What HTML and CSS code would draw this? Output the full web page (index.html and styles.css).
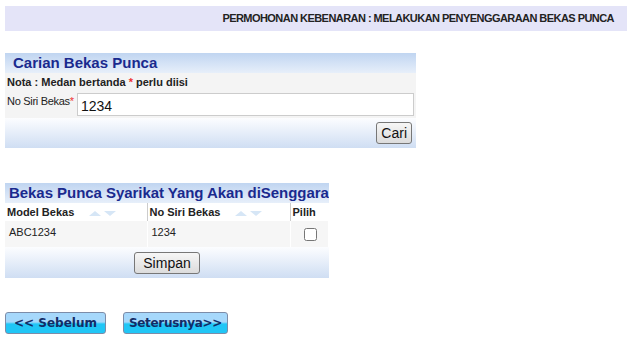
FILE: index.html
```html
<!DOCTYPE html>
<html lang="ms">
<head>
    <meta charset="UTF-8">
    <title>Penyenggaraan Bekas Punca</title>
    <link rel="stylesheet" href="styles.css">
</head>
<body>
    <div class="page-title">PERMOHONAN KEBENARAN : MELAKUKAN PENYENGGARAAN BEKAS PUNCA</div>

    <div class="panel search-panel">
        <div class="panel-head">Carian Bekas Punca</div>
        <div class="note">Nota : Medan bertanda <span class="req">*</span> perlu diisi</div>
        <div class="field-row">
            <label for="no-siri">No Siri Bekas<span class="req">*</span></label>
            <input type="text" id="no-siri" value="1234">
        </div>
        <div class="panel-foot right">
            <button class="btn">Cari</button>
        </div>
    </div>

    <div class="panel result-panel">
        <div class="panel-head">Bekas Punca Syarikat Yang Akan diSenggara</div>
        <table class="grid">
            <thead>
                <tr>
                    <th class="col-model">Model Bekas <span class="sort"><i class="up"></i><i class="down"></i></span></th>
                    <th class="col-siri">No Siri Bekas <span class="sort"><i class="up"></i><i class="down"></i></span></th>
                    <th class="col-pilih">Pilih</th>
                </tr>
            </thead>
            <tbody>
                <tr>
                    <td>ABC1234</td>
                    <td>1234</td>
                    <td class="center"><input type="checkbox"></td>
                </tr>
            </tbody>
        </table>
        <div class="panel-foot center">
            <button class="btn">Simpan</button>
        </div>
    </div>

    <div class="nav-buttons">
        <button class="nav-btn prev">&lt;&lt; Sebelum</button>
        <button class="nav-btn next">Seterusnya&gt;&gt;</button>
    </div>
</body>
</html>
```

FILE: styles.css
```css
* { margin: 0; padding: 0; box-sizing: border-box; }
body { font-family: "Liberation Sans", Arial, sans-serif; font-size: 11px; color: #222; background: #fff; padding: 6px 0 0 5px; }

.page-title { height: 25px; line-height: 25px; background-color: #e4e4f8; text-align: right; padding-right: 13px; font-weight: bold; font-size: 11px; letter-spacing: -0.55px; color: #222; white-space: nowrap; }

.panel { margin-top: 22px; }
.search-panel { width: 411px; }
.result-panel { width: 324px; margin-top: 35px; }

.panel-head { height: 20px; line-height: 20px; padding-left: 8px; font-size: 15px; font-weight: bold; color: #1a2a8e; white-space: nowrap; overflow: hidden; background: linear-gradient(#c0d5f1, #e7effa); }
.result-panel .panel-head { padding-left: 4px; letter-spacing: -0.05px; }

.note { height: 18px; line-height: 18px; padding-left: 2px; font-weight: bold; background-color: #f4f4f4; }
.req { color: #e33; }

.field-row { display: flex; align-items: flex-start; background-color: #f4f4f4; padding: 2px; }
.field-row label { width: 70px; padding-top: 2px; white-space: nowrap; letter-spacing: -0.3px; }
.field-row input { flex: 1; height: 23px; border: 1px solid #ccc; font-family: "Liberation Sans", Arial, sans-serif; font-size: 14px; padding: 2px 4px 0 3px; color: #111; }

.panel-foot { height: 30px; display: flex; align-items: center; padding: 0 4px; background: linear-gradient(#fcfdff, #cfdef3); }
.result-panel .panel-foot { height: 31px; }
.panel-foot.right { justify-content: flex-end; }
.panel-foot.center { justify-content: center; }

.btn { font-family: "Liberation Sans", Arial, sans-serif; font-size: 14px; color: #111; padding: 1px 4px; height: 22px; border: 1px solid #777; border-radius: 3px; background: linear-gradient(#f6f6f6, #dcdcdc); }
.result-panel .btn { padding: 1px 8px; }

.grid { width: 100%; border-collapse: collapse; }
.grid th { text-align: left; font-weight: bold; height: 18px; padding: 0 2px; background-color: #fff; border-right: 1px solid #ccc; white-space: nowrap; }
.grid th:last-child { border-right: none; }
.grid td { height: 23px; padding: 0 2px 4px 4px; background-color: #f6f6f6; border-right: 1px solid #fff; }
.grid .col-model { width: 142px; }
.grid .col-siri { width: 143px; }
.grid .center { text-align: center; }
.grid input[type=checkbox] { width: 13px; height: 13px; margin-top: 7px; }

.sort { display: inline-flex; gap: 3px; margin-left: 12px; vertical-align: middle; }
.sort i { width: 0; height: 0; border-left: 6px solid transparent; border-right: 6px solid transparent; }
.sort .up { border-bottom: 5px solid #d6e6f6; }
.sort .down { border-top: 5px solid #d6e6f6; }

.nav-buttons { display: flex; gap: 17px; margin-top: 34px; }
.nav-btn { height: 22px; padding: 0; font-family: "DejaVu Sans", Verdana, sans-serif; font-size: 12px; font-weight: bold; color: #122c66; border: 1px solid #7c8ca8; border-radius: 3px; background: linear-gradient(#a6d8fb 0%, #a6d8fb 45%, #20c6f6 55%, #20c6f6 100%); }
.nav-btn.prev { width: 101px; }
.nav-btn.next { width: 105px; letter-spacing: -0.3px; }
```
